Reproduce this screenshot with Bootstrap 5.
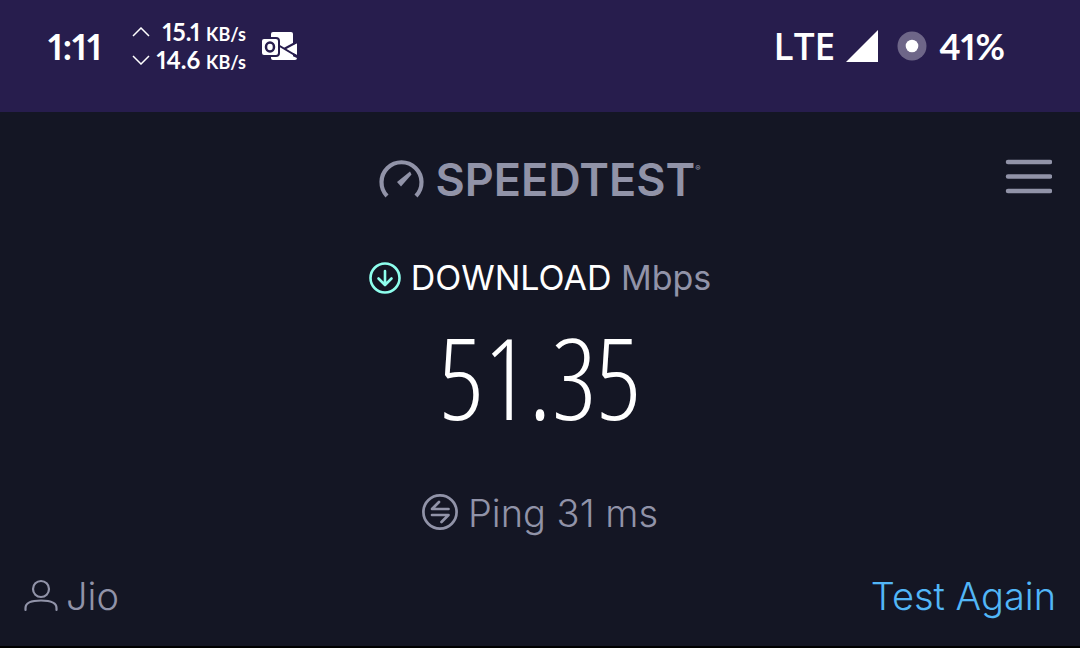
<!DOCTYPE html>
<html lang="en">
<head>
<meta charset="utf-8">
<meta name="viewport" content="width=device-width, initial-scale=1">
<title>Speedtest</title>
<link rel="stylesheet" href="https://cdn.jsdelivr.net/npm/bootstrap@5.3.0/dist/css/bootstrap.min.css">
<style>
  body { background: #141624; color: #9193a8; font-family: Inter, sans-serif; }
  svg { display: block; flex: none; }
  .screen { border-bottom: 3px solid #000; }
  .status-bar { background: #271d4d; color: #fff; min-height: 112px; padding: 17px 75px 0 48px; font-family: Lato, sans-serif; font-variant-numeric: proportional-nums; }
  .status-row { height: 58px; }
  .clock { font-size: 36px; line-height: 56px; font-weight: 700; }
  .rates { font-size: 24px; line-height: 28px; font-weight: 700; margin-left: 30px; }
  .rates small { font-size: 18px; line-height: 20px; }
  .rate-row { width: 114px; height: 28px; }
  .mail { margin-left: 14px; }
  .network { font-family: "Open Sans", sans-serif; font-size: 37px; line-height: 56px; font-weight: 600; }
  .battery { font-family: Lato, sans-serif; font-size: 36px; font-weight: 700; }
  .top-row { display: grid; grid-template-columns: 1fr auto 1fr; padding: 40px 28px 0; }
  .wordmark { font-size: 45px; line-height: 56px; font-weight: 600; color: #9193a8; }
  .wordmark sup { font-size: 8px; top: -25px; }
  .menu-btn { justify-self: end; align-self: start; padding-top: 7px; }
  .metric-label { font-size: 34px; line-height: 48px; margin-top: 46px; }
  .metric-value { font-family: "Open Sans Condensed Light", "Roboto Condensed", Roboto, sans-serif; font-weight: 300; font-size: 112px; line-height: 120px; margin-top: 15px; color: #fff; }
  .ping { font-size: 38px; line-height: 48px; font-weight: 300; margin-top: 52px; }
  .bottom-row { font-size: 38px; line-height: 48px; font-weight: 300; padding: 35px 24px 26px; }
  .again { color: #52b6f7; }
</style>
</head>
<body>
<div class="screen">
  <header class="status-bar">
    <div class="status-row d-flex align-items-center justify-content-between">
      <div class="d-flex align-items-center">
        <span class="clock">1:11</span>
        <div class="rates">
          <div class="rate-row d-flex align-items-center justify-content-between">
            <svg width="18" height="10" viewBox="0 0 18 10" fill="none" stroke="#fff" stroke-width="1.5"><path d="M1 9l8-8 8 8"/></svg>
            <span>15.1 <small>KB/s</small></span>
          </div>
          <div class="rate-row d-flex align-items-center justify-content-between">
            <svg width="18" height="10" viewBox="0 0 18 10" fill="none" stroke="#fff" stroke-width="1.5"><path d="M1 1l8 8 8-8"/></svg>
            <span>14.6 <small>KB/s</small></span>
          </div>
        </div>
        <svg class="mail" width="38" height="30" viewBox="0 0 38 30"><path fill="#fff" d="M13 1h18q2 0 2 2v24H13q-2 0-2-2V3q0-2 2-2z"/><path fill="#fff" d="M11 22l10-2 16 7q0 2-2 2H13q-2 0-2-2zM37 12v12l-12-6z"/><path d="M18 14l20 12M37 11l-13 7" stroke="#271d4d" stroke-width="2"/><rect x="1" y="7" width="18" height="18" rx="3" fill="#fff" stroke="#271d4d" stroke-width="2"/><ellipse cx="10" cy="16" rx="4" ry="4.500" fill="none" stroke="#271d4d" stroke-width="2.500"/></svg>
      </div>
      <div class="network d-flex align-items-center">
        <span>LTE</span>
        <svg class="ms-2 me-3" width="38" height="34" viewBox="0 0 38 34"><path d="M35 1v32H3z" fill="#fff"/></svg>
        <svg class="me-2" width="30" height="30" viewBox="0 0 30 30"><circle cx="15" cy="15" r="14.500" fill="#6e6688"/><circle cx="15" cy="15" r="6.300" fill="#fff"/></svg>
        <span class="battery ps-1">41%</span>
      </div>
    </div>
  </header>
  <main>
    <div class="top-row">
      <span></span>
      <a href="#" class="wordmark d-flex align-items-center text-decoration-none">
        <svg class="me-2" width="48" height="40" viewBox="0 0 48 40"><path d="M8 36A20 20 0 1 1 37 36" fill="none" stroke="#9193a8" stroke-width="4.200"/><path d="M31 11.500l1.500 3L22 26.500l-4-4.500z" fill="#9193a8"/></svg>
        <span>SPEEDTEST<sup>®</sup></span>
      </a>
      <button type="button" class="menu-btn btn px-0 pb-0 border-0" aria-label="Menu">
        <svg width="48" height="36" viewBox="0 0 48 36" stroke="#9193a8" stroke-width="4.500" stroke-linecap="round"><path d="M4 3h42M4 17.500h42M4 32h42"/></svg>
      </button>
    </div>
    <div class="metric-label d-flex align-items-center justify-content-center">
      <svg class="me-2" width="34" height="34" viewBox="0 0 34 34" fill="none" stroke="#8effee" stroke-width="2.600" stroke-linecap="round" stroke-linejoin="round"><circle cx="16" cy="17" r="14.500"/><path d="M16 10v13M9.500 17.500L16 24l6.500-6.500"/></svg>
      <span><span class="text-white">DOWNLOAD</span> Mbps</span>
    </div>
    <div class="metric-value text-center">51.35</div>
    <div class="ping d-flex align-items-center justify-content-center">
      <svg class="me-2" width="38" height="38" viewBox="0 0 38 38" fill="none" stroke="#9193a8" stroke-width="2.700" stroke-linecap="round" stroke-linejoin="round"><circle cx="18" cy="18" r="16.600"/><path d="M26.500 15H10L17 8M10 21h16.500L19.500 28"/></svg>
      <span>Ping 31 ms</span>
    </div>
    <div class="bottom-row d-flex align-items-center justify-content-between">
      <div class="d-flex align-items-center">
        <svg class="me-2" width="34" height="34" viewBox="0 0 34 34" fill="none" stroke="#9193a8" stroke-width="2.200" stroke-linecap="round"><circle cx="17" cy="10" r="8"/><path d="M1.500 31v-2q0-7.500 15.500-7.500T32.500 29v2"/></svg>
        <span>Jio</span>
      </div>
      <a href="#" class="again text-decoration-none">Test Again</a>
    </div>
  </main>
</div>
<script src="https://cdn.jsdelivr.net/npm/bootstrap@5.3.0/dist/js/bootstrap.bundle.min.js"></script>
</body>
</html>
